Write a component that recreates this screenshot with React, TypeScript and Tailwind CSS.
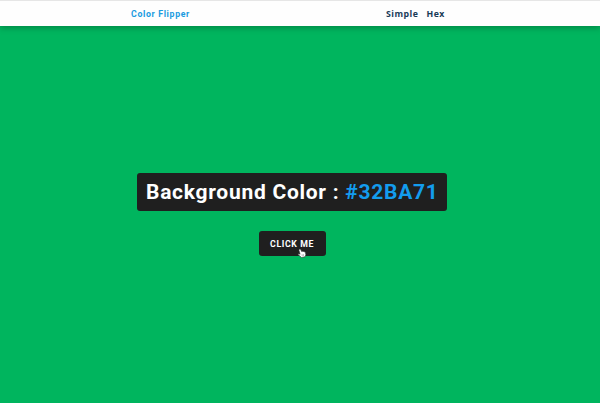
export default function App() {
  return (
    <div className="flex h-[403px] w-[600px] flex-col overflow-hidden bg-[#00b55e] font-['Roboto',sans-serif]">
      <nav className="flex h-[26px] shrink-0 items-center border-t border-[#e6e6e6] bg-[#fefefe] pt-[3px] pl-[131px] shadow-[0_2px_6px_rgba(0,0,0,0.25)]">
        <h4 className="w-[255px] text-[8.75px] font-bold tracking-[0.65px] text-[#1a9be0]">Color Flipper</h4>
        <ul className="flex gap-[8px] font-['Open_Sans',sans-serif] text-[8.75px] font-bold tracking-[0.5px] text-[#173a56]">
          <li>Simple</li>
          <li>Hex</li>
        </ul>
      </nav>
      <main className="flex flex-col items-center pt-[147px] pr-[16px]">
        <h2 className="flex h-[38px] w-[310px] items-center rounded-[3px] bg-[#1f1f1f] pt-[2px] pl-[9px] text-[21px] font-bold tracking-[0.73px] whitespace-pre text-white">
          Background Color : <span className="text-[#139cee]">#32BA71</span>
        </h2>
        <button className="relative mt-[20px] h-[25px] w-[67px] rounded-[3px] bg-[#1f1f1f] pt-[2px] text-[8.75px] font-bold tracking-[0.6px] text-white">
          CLICK ME
          <svg className="absolute top-[17px] left-[38px]" width="10" height="10" viewBox="0 0 10 10" fill="#fff" stroke="#333" strokeWidth="0.6" strokeLinejoin="round">
            <path d="M2.2 1.2Q3.1 .5 3.7 1.5L4.6 3.5Q5.3 3 5.9 3.6Q6.6 3.2 7.1 3.8Q8 3.5 8.4 4.5L8.8 6.5L8.2 8.7L4.6 9.5L1.2 6.7Q.8 5.8 1.8 5.7L3.1 6.2L1.9 2.2Z" />
            <path d="M5 6.3l.3 1.8M6.3 6.1l.3 1.8" fill="none" stroke="#888" />
          </svg>
        </button>
      </main>
    </div>
  );
}
